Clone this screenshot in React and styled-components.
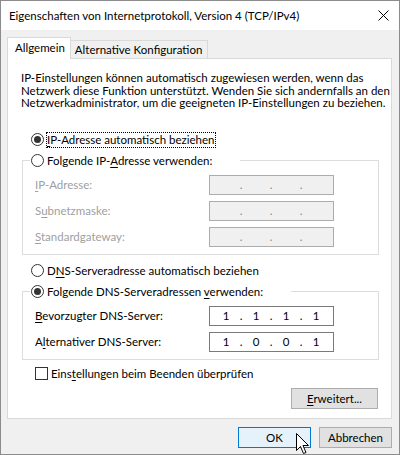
import React from 'react';
import styled, { createGlobalStyle } from 'styled-components';

const GlobalStyle = createGlobalStyle`
  html, body {
    margin: 0;
    padding: 0;
    background: #ffffff;
  }
  body {
    font-family: Lato, "Liberation Sans", sans-serif;
    font-size: 11.5px;
    color: #000000;
  }
  * {
    box-sizing: border-box;
  }
`;

const Window = styled.div`
  position: relative;
  width: 400px;
  height: 455px;
  border: 1px solid #8c8c8c;
  background: #f0f0f0;
  display: flex;
  flex-direction: column;
  overflow: hidden;
`;

const TitleBar = styled.div`
  height: 29px;
  background: #ffffff;
  display: flex;
  align-items: center;
  justify-content: space-between;
  padding: 0 10px 0 8px;
`;

const Body = styled.div`
  flex: 1;
  display: flex;
  flex-direction: column;
  padding: 7px 7px 0 6px;
`;

const TabStrip = styled.div`
  display: flex;
  align-items: flex-end;
  height: 21px;
  position: relative;
  z-index: 1;
`;

const Tab = styled.div`
  height: ${(p) => (p.$active ? '22px' : '18px')};
  margin-bottom: ${(p) => (p.$active ? '-1px' : '0')};
  padding: ${(p) => (p.$active ? '0 5px 2px 7px' : '0 5px 0 4px')};
  display: flex;
  align-items: center;
  background: ${(p) => (p.$active ? '#ffffff' : '#f0f0f0')};
  border: 1px solid #d9d9d9;
  border-bottom: none;
  border-left: ${(p) => (p.$active ? '1px solid #d9d9d9' : 'none')};
  white-space: nowrap;
`;

const Panel = styled.div`
  background: #ffffff;
  border: 1px solid #d9d9d9;
  padding: 13px 0 9px 0;
  display: flex;
  flex-direction: column;
`;

const Intro = styled.p`
  margin: 0 0 0 13px;
  line-height: 12.5px;
  white-space: nowrap;
`;

const OptionRow = styled.label`
  display: flex;
  align-items: center;
  height: 18px;
  margin: ${(p) => p.$margin || '0'};
  white-space: nowrap;
`;

const Radio = styled.span`
  width: 13px;
  height: 13px;
  border: 1px solid #333333;
  border-radius: 50%;
  margin-right: 3px;
  display: flex;
  align-items: center;
  justify-content: center;
  background: #ffffff;
  flex-shrink: 0;

  &::after {
    content: '';
    width: 7px;
    height: 7px;
    border-radius: 50%;
    background: ${(p) => (p.$checked ? '#333333' : 'transparent')};
  }
`;

const Checkbox = styled.span`
  width: 13px;
  height: 13px;
  border: 1px solid #333333;
  background: #ffffff;
  margin-right: 3px;
  flex-shrink: 0;
`;

const Focus = styled.span`
  outline: 1px dotted #000000;
  outline-offset: 0;
  padding: 0 1px 0 0;
  line-height: 14px;
`;

const Group = styled.fieldset`
  margin: ${(p) => p.$margin || '0'} 12px 0 14px;
  padding: 5px 0 7px 12px;
  border: 1px solid #dcdcdc;
  display: flex;
  flex-direction: column;
  gap: 6px;
  min-width: 0;
`;

const Legend = styled.legend`
  padding: 0 28px 0 1px;
  margin-left: -5px;
  height: 18px;
  display: flex;
  align-items: center;
  white-space: nowrap;
`;

const FieldRow = styled.div`
  display: flex;
  align-items: center;
  justify-content: space-between;
  padding-right: 44px;
  height: 20px;
  color: ${(p) => (p.$disabled ? '#a0a0a0' : '#000000')};
`;

const IpBox = styled.div`
  width: 125px;
  height: 20px;
  border: 1px solid ${(p) => (p.$disabled ? '#acacac' : '#7a7a7a')};
  background: ${(p) => (p.$disabled ? '#f0f0f0' : '#ffffff')};
  display: flex;
  align-items: center;
  padding: 0 3px;
  color: ${(p) => (p.$disabled ? '#8a8a8a' : '#000000')};
`;

const Octet = styled.span`
  width: 26px;
  text-align: center;
`;

const Dot = styled.span`
  width: 4px;
  text-align: center;
`;

const ButtonRow = styled.div`
  display: flex;
  justify-content: flex-end;
  gap: 8px;
  padding: ${(p) => p.$padding || '0'};
`;

const Button = styled.button`
  font: inherit;
  color: #000000;
  width: ${(p) => p.$width || '73px'};
  height: 21px;
  padding: 0;
  border: 1px solid ${(p) => (p.$default ? '#0078d7' : '#adadad')};
  background: ${(p) => (p.$default ? '#e5f1fb' : '#e1e1e1')};
`;

const Key = styled.span`
  text-decoration: underline;
  text-underline-offset: 2px;
`;

const Cursor = styled.svg`
  position: absolute;
  left: 295px;
  top: 432px;
`;

const CloseIcon = () => (
  <svg width="11" height="11" viewBox="0 0 11 11">
    <path d="M0.5 0.5 L10.5 10.5 M10.5 0.5 L0.5 10.5" stroke="#000" strokeWidth="1" fill="none" />
  </svg>
);

const IpInput = ({ value, disabled }) => {
  const parts = value ? value.split('.') : ['', '', '', ''];
  return (
    <IpBox $disabled={disabled}>
      <Octet>{parts[0]}</Octet>
      <Dot>.</Dot>
      <Octet>{parts[1]}</Octet>
      <Dot>.</Dot>
      <Octet>{parts[2]}</Octet>
      <Dot>.</Dot>
      <Octet>{parts[3]}</Octet>
    </IpBox>
  );
};

const App = () => (
  <>
    <GlobalStyle />
    <Window>
      <TitleBar>
        <span>Eigenschaften von Internetprotokoll, Version 4 (TCP/IPv4)</span>
        <CloseIcon />
      </TitleBar>
      <Body>
        <TabStrip>
          <Tab $active>Allgemein</Tab>
          <Tab>Alternative Konfiguration</Tab>
        </TabStrip>
        <Panel>
          <Intro>
            IP-Einstellungen können automatisch zugewiesen werden, wenn das
            <br />
            Netzwerk diese Funktion unterstützt. Wenden Sie sich andernfalls an den
            <br />
            Netzwerkadministrator, um die geeigneten IP-Einstellungen zu beziehen.
          </Intro>

          <OptionRow $margin="21px 0 0 23px">
            <Radio $checked />
            <Focus><Key>I</Key>P-Adresse automatisch beziehen</Focus>
          </OptionRow>

          <Group $margin="3px">
            <Legend>
              <Radio />
              <span>Folgende IP-<Key>A</Key>dresse verwenden:</span>
            </Legend>
            <FieldRow $disabled>
              <span><Key>I</Key>P-Adresse:</span>
              <IpInput disabled />
            </FieldRow>
            <FieldRow $disabled>
              <span>S<Key>u</Key>bnetzmaske:</span>
              <IpInput disabled />
            </FieldRow>
            <FieldRow $disabled>
              <span><Key>S</Key>tandardgateway:</span>
              <IpInput disabled />
            </FieldRow>
          </Group>

          <OptionRow $margin="7px 0 0 23px">
            <Radio />
            <span>D<Key>N</Key>S-Serveradresse automatisch beziehen</span>
          </OptionRow>

          <Group $margin="3px">
            <Legend>
              <Radio $checked />
              <span>Folgende DNS-Serveradressen <Key>v</Key>erwenden:</span>
            </Legend>
            <FieldRow>
              <span><Key>B</Key>evorzugter DNS-Server:</span>
              <IpInput value="1.1.1.1" />
            </FieldRow>
            <FieldRow>
              <span>A<Key>l</Key>ternativer DNS-Server:</span>
              <IpInput value="1.0.0.1" />
            </FieldRow>
          </Group>

          <OptionRow $margin="5px 0 0 27px">
            <Checkbox />
            <span>Eins<Key>t</Key>ellungen beim Beenden überprüfen</span>
          </OptionRow>

          <ButtonRow $padding="5px 13px 0 0">
            <Button $width="87px"><Key>E</Key>rweitert...</Button>
          </ButtonRow>
        </Panel>

        <ButtonRow $padding="8px 0 0 0">
          <Button $default>OK</Button>
          <Button>Abbrechen</Button>
        </ButtonRow>
      </Body>

      <Cursor width="14" height="24" viewBox="0 0 14 24">
        <path
          d="M0.5 0.5 L0.5 17.5 L4.5 13.5 L7.5 20.5 L10 19.5 L7 12.5 L12.5 12.5 Z"
          fill="#ffffff"
          stroke="#000000"
          strokeWidth="1"
          strokeLinejoin="miter"
        />
      </Cursor>
    </Window>
  </>
);

export default App;
